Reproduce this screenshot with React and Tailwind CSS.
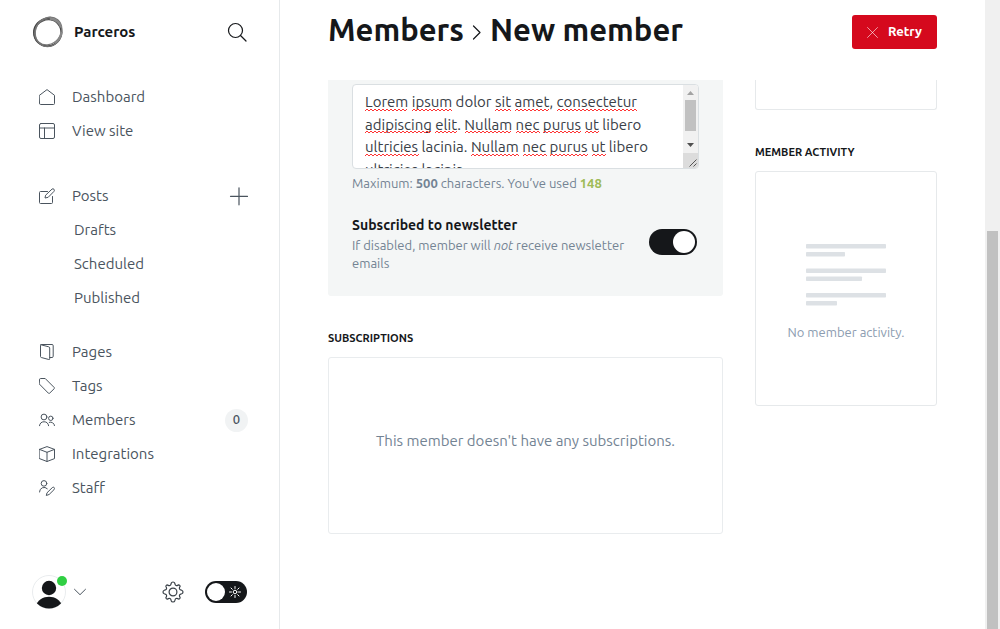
import React, { useState } from "react";

function Icon({ children, className = "size-4", box = "0 0 16 16", stroke = 1 }) {
  return (
    <svg
      viewBox={box}
      className={`shrink-0 ${className}`}
      fill="none"
      stroke="currentColor"
      strokeWidth={stroke}
      strokeLinecap="round"
      strokeLinejoin="round"
      aria-hidden="true"
    >
      {children}
    </svg>
  );
}

const HomeIcon = () => (
  <Icon>
    <path d="M.5 6.3 8 .6l7.500 5.700V14.500a1 1 0 0 1-1 1h-13a1 1 0 0 1-1-1z" />
  </Icon>
);
const LayoutIcon = () => (
  <Icon>
    <rect x=".5" y=".5" width="15" height="15" rx="1.500" />
    <path d="M.5 5h15M5.500 5v10.500" />
  </Icon>
);
const PostsIcon = () => (
  <Icon>
    <path d="M8.500 3.500h-7a1 1 0 0 0-1 1v10a1 1 0 0 0 1 1h11a1 1 0 0 0 1-1V8.500" />
    <path d="M8.800 9.400 6 10l.6-2.800L13 1.100a1.500 1.500 0 0 1 2.100 2.100z" />
  </Icon>
);
const PagesIcon = () => (
  <Icon>
    <path d="M2 .8 9.700 2.800a1.300 1.300 0 0 1 1 1.200V14.800a.7.7 0 0 1-.9.700L2.300 13.500a1 1 0 0 1-.8-1V1.300A.7.7 0 0 1 2.200.5H13a1.200 1.200 0 0 1 1.200 1.200V12.300a1.200 1.200 0 0 1-1.200 1.200H10.700" />
  </Icon>
);
const TagsIcon = () => (
  <Icon>
    <path d="M.5 1.500a1 1 0 0 1 1-1h4.700l9 9a.8.8 0 0 1 0 1.200l-4.600 4.500a.8.8 0 0 1-1.200 0L.500 6.200z" />
  </Icon>
);
const MembersIcon = () => (
  <Icon>
    <circle cx="5" cy="5" r="2.900" />
    <path d="M.5 13.700a4.600 4.600 0 0 1 9.100 0" />
    <circle cx="11.800" cy="6.300" r="2.200" />
    <path d="M10.300 10.300a3.800 3.800 0 0 1 5.200 3.300" />
  </Icon>
);
const BoxIcon = () => (
  <Icon>
    <path d="M.5 3.400 8 .6l7.500 2.800v9.200L8 15.500.500 12.600zM.5 3.400 8 6.300l7.500-2.900M8 6.300v9.200" />
  </Icon>
);
const StaffIcon = () => (
  <Icon>
    <circle cx="5" cy="3.400" r="2.800" />
    <path d="M.5 12a4.600 4.600 0 0 1 7.800-3.300" />
    <path d="M9.800 14.600 7.300 15.500l.7-2.700 5.300-5.200a1.300 1.300 0 0 1 1.900 1.900z" />
  </Icon>
);

function Logo() {
  return (
    <svg viewBox="0 0 32 32" className="size-8 shrink-0" fill="none" aria-hidden="true">
      <circle cx="15.500" cy="16.500" r="13.700" stroke="#444" strokeWidth="1.600" />
      <ellipse cx="15.600" cy="16.800" rx="14" ry="13" stroke="#555" strokeWidth="1.200" transform="rotate(-25 16 16)" />
      <ellipse cx="17" cy="15.600" rx="14.600" ry="12.600" stroke="#777" strokeWidth="1.200" transform="rotate(-50 16 16)" />
      <ellipse cx="16.600" cy="15.800" rx="13" ry="14.800" stroke="#777" strokeWidth="1" transform="rotate(20 16 16)" />
      <path d="M18 2.500c5.500.8 10 4 11 9M29.500 16c-.5 5-3 8.500-6.500 11" stroke="#888" strokeWidth="2.400" />
    </svg>
  );
}

function NavItem({ icon, label, children }) {
  return (
    <li className="flex h-[34px] items-center justify-between">
      <a href="#" className="flex items-center gap-[17px]">
        {icon}
        <span>{label}</span>
      </a>
      {children}
    </li>
  );
}

function Sidebar() {
  const [night, setNight] = useState(false);
  return (
    <aside className="flex h-screen w-[280px] shrink-0 flex-col border-r border-[#e6e9eb] text-[15px] text-[#4a545e]">
      <div className="flex h-16 items-center gap-2.5 pl-8 pr-8">
        <Logo />
        <span className="grow font-bold text-[#15171a]">Parceros</span>
        <button type="button" aria-label="Search" className="text-[#15171a]">
          <Icon className="size-5" box="0 0 20 20" stroke={1.2}>
            <circle cx="8.500" cy="8.500" r="7" />
            <path d="m13.500 13.500 5.500 5.500" />
          </Icon>
        </button>
      </div>

      <nav className="grow pl-[39px] pr-[31px] pt-4">
        <ul>
          <NavItem icon={<HomeIcon />} label="Dashboard" />
          <NavItem icon={<LayoutIcon />} label="View site" />
        </ul>
        <ul className="mt-[31px]">
          <NavItem icon={<PostsIcon />} label="Posts">
            <button type="button" aria-label="New post">
              <Icon className="size-[19px]" box="0 0 19 19" stroke={1.2}>
                <path d="M10 .8v17M1.500 9.300h17" />
              </Icon>
            </button>
          </NavItem>
          {["Drafts", "Scheduled", "Published"].map((label) => (
            <li key={label} className="flex h-[34px] items-center pl-[35px]">
              <a href="#">{label}</a>
            </li>
          ))}
        </ul>
        <ul className="mt-5">
          <NavItem icon={<PagesIcon />} label="Pages" />
          <NavItem icon={<TagsIcon />} label="Tags" />
          <NavItem icon={<MembersIcon />} label="Members">
            <span className="flex h-[23px] w-[23px] items-center justify-center rounded-full bg-[#f1f3f4] text-[13px] font-medium">
              0
            </span>
          </NavItem>
          <NavItem icon={<BoxIcon />} label="Integrations" />
          <NavItem icon={<StaffIcon />} label="Staff" />
        </ul>
      </nav>

      <div className="flex h-[74px] items-center pl-8 pr-8">
        <button type="button" aria-label="Your account" className="flex items-center gap-2">
          <span className="relative">
            <svg viewBox="0 0 34 34" className="size-[34px]" aria-hidden="true">
              <defs>
                <clipPath id="avatar-clip">
                  <circle cx="17" cy="17" r="16.500" />
                </clipPath>
              </defs>
              <circle cx="17" cy="17" r="16.500" fill="#fff" stroke="#e9ecee" />
              <g clipPath="url(#avatar-clip)" fill="#15171a">
                <circle cx="17" cy="13" r="7.200" />
                <path d="M4 30c2-5 7-8.300 13-8.300S28 25 30 30l-4 5H8z" />
              </g>
            </svg>
            <span className="absolute -right-px top-px size-2.5 rounded-full bg-[#30cf43]" />
          </span>
          <Icon className="size-3" box="0 0 12 12" stroke={1}>
            <path d="m.5 3.300 5.500 5.400 5.500-5.400" />
          </Icon>
        </button>
        <button type="button" aria-label="Settings" className="ml-auto mr-[21px] text-[#394047]">
          <Icon className="size-[22px]" box="0 0 22 22" stroke={1.2}>
            <circle cx="11" cy="11" r="3.900" />
            <path d="M9.200 2.300 8.900 3.300a1.800 1.800 0 0 1-2.600 1.100L5.400 3.900A1.400 1.400 0 0 0 3.900 5.400l.5 1a1.800 1.800 0 0 1-1.100 2.500l-1 .3a1.900 1.900 0 0 0 0 3.600l1 .3a1.800 1.800 0 0 1 1.100 2.600l-.5.900a1.400 1.400 0 0 0 1.500 1.500l1-.5a1.800 1.800 0 0 1 2.500 1.100l.3 1a1.900 1.900 0 0 0 3.600 0l.3-1a1.800 1.800 0 0 1 2.600-1.100l.9.500a1.400 1.400 0 0 0 1.500-1.500l-.5-1a1.800 1.800 0 0 1 1.100-2.500l1-.3a1.900 1.900 0 0 0 0-3.600l-1-.3a1.800 1.800 0 0 1-1.100-2.600l.5-.9a1.400 1.400 0 0 0-1.500-1.500l-1 .5a1.800 1.800 0 0 1-2.500-1.100l-.3-1a1.900 1.900 0 0 0-3.600 0z" />
          </Icon>
        </button>
        <label className="relative flex h-[22px] w-[42px] cursor-pointer items-center justify-between rounded-full bg-[#15171a] px-0.5 has-checked:flex-row-reverse">
          <input
            type="checkbox"
            aria-label="Night shift"
            checked={night}
            onChange={(e) => setNight(e.target.checked)}
            className="absolute inset-0 cursor-pointer opacity-0"
          />
          <span className="size-[18px] rounded-full bg-white" />
          <Icon className="mr-1 size-3 text-white" box="0 0 12 12">
            <circle cx="6" cy="6" r="1.800" />
            <path d="M6 .5v2M6 9.500v2M.5 6h2M9.500 6h2M2 2l1.300 1.300M8.700 8.700 10 10M2 10l1.300-1.300M8.700 3.300 10 2" />
          </Icon>
        </label>
      </div>
    </aside>
  );
}

const NOTE =
  "Lorem ipsum dolor sit amet, consectetur adipiscing elit. Nullam nec purus ut libero ultricies lacinia. Nullam nec purus ut libero ultricies lacinia.";

/* Spelling marks, one list per line: [start, end] in pixels from the text's left edge. */
const MARKS = [
  { y: 24, words: [[0, 42], [47, 87], [130, 146], [150, 184], [192, 272]] },
  { y: 46, words: [[0, 66], [70, 92], [100, 146], [151, 174], [178, 216], [220, 234]] },
  { y: 69, words: [[0, 53], [106, 153], [158, 181], [185, 223], [227, 241]] },
];

function squiggle([from, to], y) {
  let d = `M${from} ${y + 2}`;
  for (let x = from, up = true; x < to; x += 2, up = !up) d += `l2 ${up ? -2 : 2}`;
  return d;
}

function NoteField() {
  const [note, setNote] = useState(NOTE);
  return (
    <div>
      <div className="relative flex h-[85px] overflow-hidden rounded border border-[#dadfe2] bg-white">
        <textarea
          aria-label="Note"
          value={note}
          spellCheck={false}
          onChange={(e) => setNote(e.target.value)}
          className="block h-full grow resize-none overflow-hidden px-3 pt-1.5 text-[15px] leading-normal text-[#394047] outline-none"
        />
        <svg
          className="pointer-events-none absolute left-3 top-0 h-full w-[306px]"
          fill="none"
          stroke="#f33"
          strokeWidth="1"
          aria-hidden="true"
        >
          {MARKS.map(({ y, words }) => words.map((w) => <path key={`${y}-${w[0]}`} d={squiggle(w, y)} />))}
        </svg>
        <div className="flex w-[15px] shrink-0 flex-col items-center bg-[#f1f1f1]" aria-hidden="true">
          <svg viewBox="0 0 15 15" className="size-[15px]">
            <path d="M4 10h7L7.500 6z" fill="#a3a3a3" />
          </svg>
          <div className="h-[31px] w-[11px] bg-[#c1c1c1]" />
          <div className="grow" />
          <svg viewBox="0 0 15 15" className="size-[15px]">
            <path d="M4 5h7L7.500 9z" fill="#505050" />
          </svg>
          <svg viewBox="0 0 15 15" className="size-[15px] bg-[#dcdcdc]">
            <path d="m6.500 13.500 7-7M10.500 13.500l3-3" stroke="#555" />
          </svg>
        </div>
      </div>
      <p className="mt-[5px] text-[13px] leading-[18px] text-[#738393]">
        Maximum: <b>500</b> characters. You’ve used <b className="text-[#9fbb58]">148</b>
      </p>
    </div>
  );
}

function SectionTitle({ children }) {
  return <h2 className="text-[11px] font-semibold uppercase leading-4 text-[#15171a]">{children}</h2>;
}

function ActivityPlaceholder() {
  return (
    <svg viewBox="0 0 80 62" className="h-[62px] w-20" fill="#dde1e5" aria-hidden="true">
      <rect width="80" height="4.500" rx=".8" />
      <rect y="8" width="39" height="4.500" rx=".8" />
      <rect y="24.500" width="80" height="4.500" rx=".8" />
      <rect y="32.500" width="56" height="4.500" rx=".8" />
      <rect y="49" width="80" height="4.500" rx=".8" />
      <rect y="57" width="31" height="4.500" rx=".8" />
    </svg>
  );
}

export default function App() {
  const [subscribed, setSubscribed] = useState(true);
  return (
    <div className="flex min-h-screen bg-white font-[Ubuntu,'Noto_Sans',sans-serif]">
      <Sidebar />
      <main className="flex min-w-0 grow flex-col">
        <header className="flex h-20 items-start justify-between px-12 pt-[15px]">
          <h1 className="flex items-center gap-2 text-[31px] font-bold leading-[30px] text-[#15171a]">
            <a href="#">Members</a>
            <Icon className="mt-1 h-[15px] w-[10px]" box="0 0 10 15" stroke={1.2}>
              <path d="m1.500 1 6.500 6.500L1.500 14" />
            </Icon>
            <span>New member</span>
          </h1>
          <button
            type="button"
            className="flex h-[34px] items-center gap-2.5 rounded-[3px] bg-[#d5091d] px-[15px] text-[13px] font-semibold text-white"
          >
            <Icon className="size-[11px]" box="0 0 11 11" stroke={0.6}>
              <path d="m.5.500 10 10M10.500.500l-10 10" />
            </Icon>
            Retry
          </button>
        </header>

        <div className="flex items-start gap-8 px-12">
          <div className="min-w-0 grow">
            <section className="rounded-b-[3px] bg-[#f4f6f6] px-6 pb-6 pt-1">
              <NoteField />
              <div className="mt-[23px] flex items-start gap-4">
                <div className="grow">
                  <h4 className="text-sm font-semibold leading-5 text-[#15171a]">Subscribed to newsletter</h4>
                  <p className="mt-px text-[13px] leading-[18px] text-[#738393]">
                    If disabled, member will <em>not</em> receive newsletter emails
                  </p>
                </div>
                <label className="relative mr-0.5 mt-3.5 flex h-[26px] w-12 shrink-0 cursor-pointer items-center rounded-full bg-[#cfd4d9] px-0.5 has-checked:justify-end has-checked:bg-[#15171a]">
                  <input
                    type="checkbox"
                    aria-label="Subscribed to newsletter"
                    checked={subscribed}
                    onChange={(e) => setSubscribed(e.target.checked)}
                    className="absolute inset-0 cursor-pointer opacity-0"
                  />
                  <span className="size-[22px] rounded-full bg-white" />
                </label>
              </div>
            </section>

            <section className="mt-[34px]">
              <SectionTitle>Subscriptions</SectionTitle>
              <div className="mt-[11px] flex h-[177px] items-center justify-center rounded-[3px] border border-[#e9ecee] pb-2">
                <p className="text-[15px] text-[#738393]">This member doesn't have any subscriptions.</p>
              </div>
            </section>
          </div>

          <div className="w-[182px] shrink-0">
            <div className="h-[30px] rounded-b-[3px] border border-t-0 border-[#e6e9eb]" />
            <section className="mt-[34px]">
              <SectionTitle>Member activity</SectionTitle>
              <div className="mt-[11px] flex h-[235px] flex-col items-center gap-4 rounded-[3px] border border-[#e6e9eb] pt-[72px]">
                <ActivityPlaceholder />
                <p className="text-[13px] leading-5 text-[#8c9cb0]">No member activity.</p>
              </div>
            </section>
          </div>
        </div>
      </main>
      <div className="flex w-[15px] shrink-0 flex-col items-center bg-[#f0f0f0]" aria-hidden="true">
        <div className="h-[231px]" />
        <div className="w-[11px] grow bg-[#c1c1c1]" />
      </div>
    </div>
  );
}
